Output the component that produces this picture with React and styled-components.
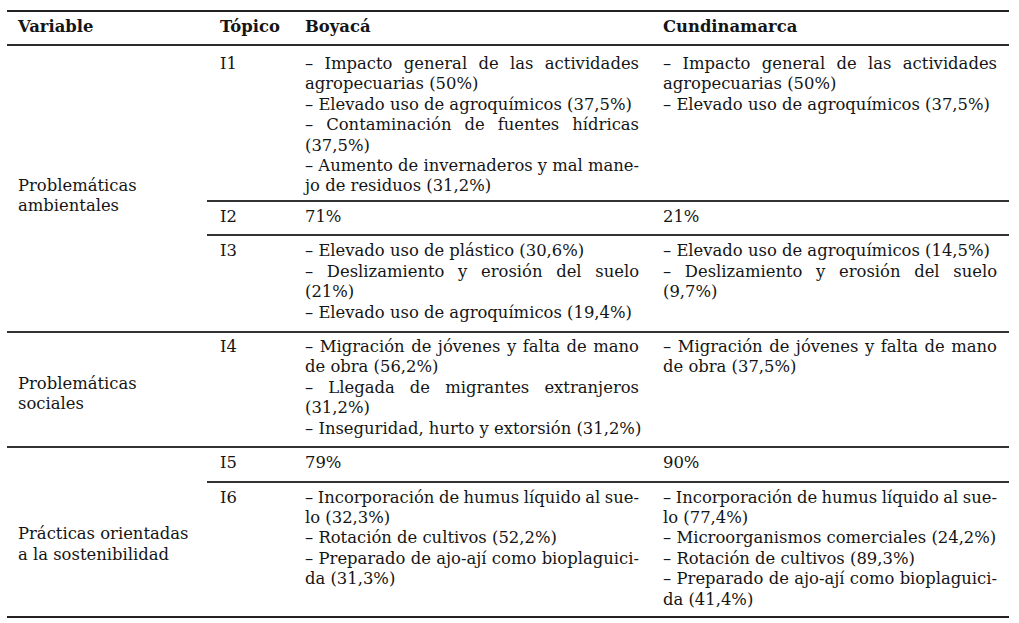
import React from 'react'
import styled, { createGlobalStyle } from 'styled-components'

const Global = createGlobalStyle`
body {
  margin: 0;
  background: #ffffff;
}
`

const Page = styled.div`
padding: 10px 10px 0 7px;
font-family: "DejaVu Serif", "Liberation Serif", serif;
color: #151515;
`

const Table = styled.table`
width: 1002px;
table-layout: fixed;
border-collapse: separate;
border-spacing: 0;
font-size: 16.4px;
line-height: 20.4px;
`

const Th = styled.th`
text-align: left;
font-weight: bold;
padding: 5.4px 12px 6.2px ${(p) => p.$pl || 12}px;
border-top: 2px solid #222;
border-bottom: 2px solid #2b2b2b;
white-space: nowrap;
`

const Td = styled.td`
vertical-align: top;
padding: ${(p) => p.$pt}px 12px ${(p) => p.$pb}px ${(p) => p.$pl || 12}px;
border-top: ${(p) => (p.$rule ? '2px solid #333' : 'none')};
border-bottom: ${(p) => (p.$last ? '2px solid #222' : 'none')};
`

const VarCell = styled(Td)`
vertical-align: middle;
padding-left: 11px;
`

const Line = styled.span`
display: block;
white-space: nowrap;
text-align: left;
text-align-last: ${(p) => (p.$fill ? 'justify' : 'left')};
word-spacing: ${(p) => (p.$fill ? '-1px' : '0')};
`

const groups = [
  {
    name: ['Problemáticas', 'ambientales'],
    shift: 15,
    rows: [
      {
        topic: 'I1',
        pt: 8,
        pb: 3.5,
        boyaca: [
          ['– Impacto general de las actividades', 'agropecuarias (50%)'],
          ['– Elevado uso de agroquímicos (37,5%)'],
          ['– Contaminación de fuentes hídricas', '(37,5%)'],
          ['– Aumento de invernaderos y mal mane-', 'jo de residuos (31,2%)'],
        ],
        cundinamarca: [
          ['– Impacto general de las actividades', 'agropecuarias (50%)'],
          ['– Elevado uso de agroquímicos (37,5%)'],
        ],
      },
      { topic: 'I2', pt: 4.4, pb: 7.3, boyaca: [['71%']], cundinamarca: [['21%']] },
      {
        topic: 'I3',
        pt: 5,
        pb: 8,
        boyaca: [
          ['– Elevado uso de plástico (30,6%)'],
          ['– Deslizamiento y erosión del suelo', '(21%)'],
          ['– Elevado uso de agroquímicos (19,4%)'],
        ],
        cundinamarca: [
          ['– Elevado uso de agroquímicos (14,5%)'],
          ['– Deslizamiento y erosión del suelo', '(9,7%)'],
        ],
      },
    ],
  },
  {
    name: ['Problemáticas', 'sociales'],
    shift: 10,
    rows: [
      {
        topic: 'I4',
        pt: 4,
        pb: 6.6,
        boyaca: [
          ['– Migración de jóvenes y falta de mano', 'de obra (56,2%)'],
          ['– Llegada de migrantes extranjeros', '(31,2%)'],
          ['– Inseguridad, hurto y extorsión (31,2%)'],
        ],
        cundinamarca: [['– Migración de jóvenes y falta de mano', 'de obra (37,5%)']],
      },
    ],
  },
  {
    name: ['Prácticas orientadas', 'a la sostenibilidad'],
    shift: 25.5,
    rows: [
      { topic: 'I5', pt: 5, pb: 7.9, boyaca: [['79%']], cundinamarca: [['90%']] },
      {
        topic: 'I6',
        pt: 4.7,
        pb: 6.2,
        boyaca: [
          ['– Incorporación de humus líquido al sue-', 'lo (32,3%)'],
          ['– Rotación de cultivos (52,2%)'],
          ['– Preparado de ajo-ají como bioplaguici-', 'da (31,3%)'],
        ],
        cundinamarca: [
          ['– Incorporación de humus líquido al sue-', 'lo (77,4%)'],
          ['– Microorganismos comerciales (24,2%)'],
          ['– Rotación de cultivos (89,3%)'],
          ['– Preparado de ajo-ají como bioplaguici-', 'da (41,4%)'],
        ],
      },
    ],
  },
]

// each item is a list of lines; every line but the last one is justified
const Items = ({ items }) =>
  items.map((lines, i) =>
    lines.map((text, j) => (
      <Line key={i + '-' + j} $fill={j < lines.length - 1}>
        {text}
      </Line>
    ))
  )

const App = () => {
  return (
    <Page>
      <Global />
      <Table>
        <colgroup>
          <col style={{ width: '200px' }} />
          <col style={{ width: '86px' }} />
          <col style={{ width: '358px' }} />
          <col style={{ width: '358px' }} />
        </colgroup>
        <thead>
          <tr>
            <Th $pl={11}>Variable</Th>
            <Th $pl={13}>Tópico</Th>
            <Th>Boyacá</Th>
            <Th>Cundinamarca</Th>
          </tr>
        </thead>
        <tbody>
          {groups.map((g, gi) => {
            const lastGroup = gi === groups.length - 1
            return g.rows.map((row, ri) => {
              const rule = gi > 0 || ri > 0
              const last = lastGroup && ri === g.rows.length - 1
              const cell = { $rule: rule, $last: last, $pt: row.pt, $pb: row.pb }
              return (
                <tr key={row.topic}>
                  {ri === 0 && (
                    <VarCell
                      rowSpan={g.rows.length}
                      $pt={g.shift}
                      $pb={0}
                      $rule={gi > 0}
                      $last={lastGroup}>
                      {g.name.map((n) => (
                        <Line key={n}>{n}</Line>
                      ))}
                    </VarCell>
                  )}
                  <Td $pl={13} {...cell}>
                    {row.topic}
                  </Td>
                  <Td {...cell}>
                    <Items items={row.boyaca} />
                  </Td>
                  <Td {...cell}>
                    <Items items={row.cundinamarca} />
                  </Td>
                </tr>
              )
            })
          })}
        </tbody>
      </Table>
    </Page>
  )
}

export default App
